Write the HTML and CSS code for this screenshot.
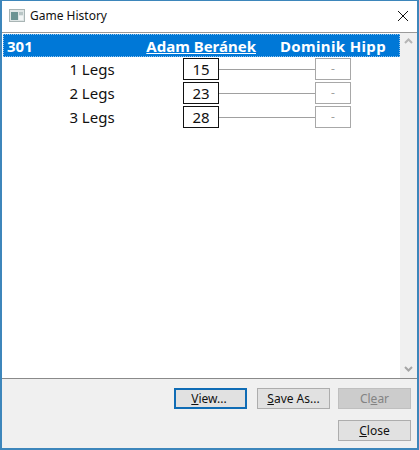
FILE: index.html
```html
<!DOCTYPE html>
<html lang="en">
<head>
  <meta charset="UTF-8" />
  <title>Game History</title>
  <link rel="stylesheet" href="styles.css">
</head>
<body>
  <div class="window">
    <header class="titlebar">
      <svg class="app-icon" width="16" height="13" viewBox="0 0 16 13">
        <rect x="0.5" y="0.5" width="15" height="12" fill="#dfe6e6" stroke="#a9b5b5" />
        <rect x="2" y="3" width="7" height="8" fill="#6b9393" />
        <rect x="10" y="3" width="4" height="3" fill="#b9c6c6" />
        <rect x="10" y="7" width="4" height="4" fill="#f2f5f5" />
      </svg>
      <span class="title">Game History</span>
      <svg class="close-x" width="12" height="12" viewBox="0 0 12 12">
        <path d="M1 1 L11 11 M11 1 L1 11" stroke="#111" stroke-width="1" fill="none" />
      </svg>
    </header>

    <div class="listbox">
      <div class="list">
        <div class="list-head">
          <span class="game">301</span>
          <span class="player current">Adam Beránek</span>
          <span class="player">Dominik Hipp</span>
        </div>
        <div class="row">
          <span class="legs">1 Legs</span>
          <span class="score">15</span>
          <span class="line"></span>
          <span class="score empty">-</span>
        </div>
        <div class="row">
          <span class="legs">2 Legs</span>
          <span class="score">23</span>
          <span class="line"></span>
          <span class="score empty">-</span>
        </div>
        <div class="row">
          <span class="legs">3 Legs</span>
          <span class="score">28</span>
          <span class="line"></span>
          <span class="score empty">-</span>
        </div>
      </div>
      <div class="scrollbar">
        <svg width="9" height="6" viewBox="0 0 9 6"><path d="M1 5 L4.5 1.5 L8 5" stroke="#b5b5b5" stroke-width="2" fill="none" /></svg>
        <svg width="9" height="6" viewBox="0 0 9 6"><path d="M1 1 L4.5 4.5 L8 1" stroke="#a6a6a6" stroke-width="2" fill="none" /></svg>
      </div>
    </div>

    <footer class="actions">
      <div class="button-row">
        <button class="btn default"><u>V</u>iew...</button>
        <button class="btn"><u>S</u>ave As...</button>
        <button class="btn disabled">Cl<u>e</u>ar</button>
      </div>
      <div class="button-row">
        <button class="btn"><u>C</u>lose</button>
      </div>
    </footer>
  </div>
</body>
</html>
```

FILE: styles.css
```css
html, body {
  margin: 0;
  height: 100%;
}

body {
  font-family: "Noto Sans", "Open Sans", sans-serif;
  color: #111;
  overflow: hidden;
}

.window {
  box-sizing: border-box;
  width: 419px;
  height: 450px;
  display: flex;
  flex-direction: column;
  background: #f0f0f0;
  border: 1px solid #3d86bb;
  border-width: 1px 2px 2px 2px;
}

.titlebar {
  height: 31px;
  flex: none;
  display: flex;
  align-items: center;
  background: #fff;
  padding: 0 8px 2px 7px;
  box-sizing: border-box;
}

.app-icon {
  margin-right: 5px;
}

.title {
  font-size: 12px;
  flex: 1;
}

.listbox {
  flex: none;
  height: 347px;
  box-sizing: border-box;
  display: flex;
  background: #fff;
  border-top: 1px solid #9a9a9a;
  border-bottom: 1px solid #8a8a8a;
  padding-top: 1px;
}

.list {
  flex: 1;
  padding-left: 1px;
}

.list-head {
  height: 23px;
  display: grid;
  grid-template-columns: 137px 116px 1fr;
  align-items: center;
  background: #0078d7;
  color: #fff;
  font-weight: 700;
  font-size: 15px;
  outline: 1px dotted #8fc4ee;
  outline-offset: -1px;
}

.game {
  padding-left: 4px;
}

.player {
  text-align: right;
  white-space: nowrap;
}

.player.current {
  text-decoration: underline;
}

.player:last-child {
  margin-right: 14px;
  letter-spacing: 0.35px;
}

.row {
  display: flex;
  align-items: center;
  height: 24px;
}

.legs {
  width: 178px;
  margin-right: 2px;
  text-align: center;
  font-size: 15px;
}

.score {
  box-sizing: border-box;
  width: 36px;
  height: 22px;
  border: 1px solid #111;
  font-size: 15px;
  line-height: 20px;
  text-align: center;
}

.score.empty {
  border-color: #a8a8a8;
  color: #a0a0a0;
  font-size: 12px;
}

.line {
  width: 96px;
  height: 1px;
  background: #a0a0a0;
}

.scrollbar {
  width: 17px;
  flex: none;
  display: flex;
  flex-direction: column;
  justify-content: space-between;
  align-items: center;
  background: #f0f0f0;
  padding: 5px 0 6px;
  box-sizing: border-box;
  margin-top: -1px;
}

.actions {
  flex: 1;
  padding: 9px 6px 0 0;
  display: flex;
  flex-direction: column;
  gap: 11px;
}

.button-row {
  display: flex;
  justify-content: flex-end;
  gap: 10px;
}

.btn {
  box-sizing: border-box;
  width: 73px;
  height: 21px;
  padding: 0;
  font-family: inherit;
  font-size: 12px;
  color: #111;
  background: #e1e1e1;
  border: 1px solid #adadad;
}

.btn.default {
  border: 2px solid #0f6cb5;
  padding-right: 3px;
}

.btn.disabled {
  background: #ccc;
  border-color: #bfbfbf;
  color: #838383;
  margin-left: -2px;
}
```
